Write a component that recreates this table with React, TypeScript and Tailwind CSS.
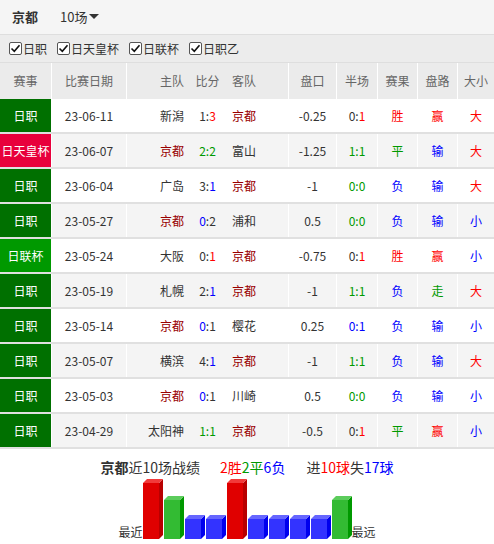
import React from "react";

const D = "text-[#333333]";
const R = "text-[#ff0000]";
const G = "text-[#009900]";
const B = "text-[#0000ff]";
const K = "text-[#990000]";

type Seg = [string, string];
type Row = {
  lg: string;
  lc: string;
  date: string;
  home: string;
  hc: string;
  score: Seg[];
  away: string;
  ac: string;
  pan: string;
  half: Seg[];
  res: Seg;
  pl: Seg;
  dx: Seg;
};

const JZ = "bg-[#007000]";
const TH = "bg-[#e8003c]";
const LB = "bg-[#009900]";

const rows: Row[] = [
  { lg: "日职", lc: JZ, date: "23-06-11", home: "新潟", hc: D, score: [["1:", D], ["3", R]], away: "京都", ac: K, pan: "-0.25", half: [["0:", D], ["1", R]], res: ["胜", R], pl: ["赢", R], dx: ["大", R] },
  { lg: "日天皇杯", lc: TH, date: "23-06-07", home: "京都", hc: K, score: [["2:2", G]], away: "富山", ac: D, pan: "-1.25", half: [["1:1", G]], res: ["平", G], pl: ["输", B], dx: ["大", R] },
  { lg: "日职", lc: JZ, date: "23-06-04", home: "广岛", hc: D, score: [["3:", D], ["1", B]], away: "京都", ac: K, pan: "-1", half: [["0:0", G]], res: ["负", B], pl: ["输", B], dx: ["大", R] },
  { lg: "日职", lc: JZ, date: "23-05-27", home: "京都", hc: K, score: [["0", B], [":2", D]], away: "浦和", ac: D, pan: "0.5", half: [["0:0", G]], res: ["负", B], pl: ["输", B], dx: ["小", B] },
  { lg: "日联杯", lc: LB, date: "23-05-24", home: "大阪", hc: D, score: [["0:", D], ["1", R]], away: "京都", ac: K, pan: "-0.75", half: [["0:", D], ["1", R]], res: ["胜", R], pl: ["赢", R], dx: ["小", B] },
  { lg: "日职", lc: JZ, date: "23-05-19", home: "札幌", hc: D, score: [["2:", D], ["1", B]], away: "京都", ac: K, pan: "-1", half: [["1:1", G]], res: ["负", B], pl: ["走", G], dx: ["大", R] },
  { lg: "日职", lc: JZ, date: "23-05-14", home: "京都", hc: K, score: [["0", B], [":1", D]], away: "樱花", ac: D, pan: "0.25", half: [["0:1", B]], res: ["负", B], pl: ["输", B], dx: ["小", B] },
  { lg: "日职", lc: JZ, date: "23-05-07", home: "横滨", hc: D, score: [["4:", D], ["1", B]], away: "京都", ac: K, pan: "-1", half: [["1:1", G]], res: ["负", B], pl: ["输", B], dx: ["大", R] },
  { lg: "日职", lc: JZ, date: "23-05-03", home: "京都", hc: K, score: [["0", B], [":1", D]], away: "川崎", ac: D, pan: "0.5", half: [["0:0", G]], res: ["负", B], pl: ["输", B], dx: ["小", B] },
  { lg: "日职", lc: JZ, date: "23-04-29", home: "太阳神", hc: D, score: [["1:1", G]], away: "京都", ac: K, pan: "-0.5", half: [["0:", D], ["1", R]], res: ["平", G], pl: ["赢", R], dx: ["小", B] },
];

function Check({ label }: { label: string }) {
  return (
    <div className="flex items-center mr-[10px]">
      <span className="w-[13px] h-[13px] bg-white border border-[#555555] rounded-[2px] flex items-center justify-center">
        <svg width="11" height="11" viewBox="0 0 11 11">
          <path d="M1.5 5.5 L4.3 8.3 L9.5 2.2" fill="none" stroke="#111" strokeWidth="1.6" />
        </svg>
      </span>
      <span className="ml-px text-[12px] text-[#333333]">{label}</span>
    </div>
  );
}

type BarKind = "r" | "g" | "b";
const barColors: Record<BarKind, { f: string; s: string; t: string; h: number }> = {
  r: { f: "#e00000", s: "#b80000", t: "#f23a3a", h: 56 },
  g: { f: "#33bb33", s: "#009900", t: "#5ccc5c", h: 39 },
  b: { f: "#3333ff", s: "#0000ee", t: "#6666ff", h: 20 },
};

function Bar({ k }: { k: BarKind }) {
  const c = barColors[k];
  const h = c.h;
  return (
    <svg width="20" height={h + 4} className="block mr-px last:mr-0">
      <rect x="0" y="4" width="16" height={h} fill={c.f} />
      <polygon points={`16,4 20,0 20,${h} 16,${h + 4}`} fill={c.s} />
      <polygon points="0,4 4,0 20,0 16,4" fill={c.t} />
    </svg>
  );
}

export default function App() {
  const bars: BarKind[] = ["r", "g", "b", "b", "r", "b", "b", "b", "b", "g"];
  return (
    <div className="w-[494px] h-[544px] overflow-hidden bg-white font-['Noto_Sans_CJK_SC','Noto_Sans',sans-serif] text-[#333333]">
      {/* top bar */}
      <div className="h-[35px] bg-[#f5f5f5] border-b border-[#dedede] flex items-center pl-[12px]">
        <span className="text-[13px] font-bold text-[#333333]">京都</span>
        <span className="ml-[22px] text-[13px] text-[#333333]">10场</span>
        <svg width="10" height="6" viewBox="0 0 10 6" className="ml-[2px]">
          <polygon points="0,0 10,0 5,5" fill="#333" />
        </svg>
      </div>
      {/* filter row */}
      <div className="h-[28px] bg-[#ececec] border-b border-[#dedede] flex items-center pl-[9px]">
        <Check label="日职" />
        <Check label="日天皇杯" />
        <Check label="日联杯" />
        <Check label="日职乙" />
      </div>
      {/* table header */}
      <div className="h-[36px] bg-[#ebebeb] flex text-[12px] text-[#666666]">
        <div className="w-[52px] border-r border-white flex items-center justify-center">赛事</div>
        <div className="w-[75px] border-r border-white flex items-center justify-center">比赛日期</div>
        <div className="w-[162px] border-r border-white flex items-center">
          <span className="w-[57px] text-right">主队</span>
          <span className="w-[47px] text-center">比分</span>
          <span className="pl-px">客队</span>
        </div>
        <div className="w-[48px] border-r border-white flex items-center justify-center">盘口</div>
        <div className="w-[41px] border-r border-white flex items-center justify-center">半场</div>
        <div className="w-[40px] border-r border-white flex items-center justify-center">赛果</div>
        <div className="w-[40px] border-r border-white flex items-center justify-center">盘路</div>
        <div className="flex-1 flex items-center justify-center">大小</div>
      </div>
      {/* rows */}
      {rows.map((r, i) => (
        <div
          key={i}
          className={`h-[35px] flex text-[12px] border-b-2 border-[#e0e0e0] ${i % 2 === 0 ? "bg-white" : "bg-[#f4f4f4]"}`}
        >
          <div className="w-[52px] border-r border-white flex">
            <div className={`flex-1 flex items-center justify-center text-white ${r.lc}`}>{r.lg}</div>
          </div>
          <div className="w-[75px] border-r border-white flex items-center justify-center text-[#333333]">{r.date}</div>
          <div className="w-[162px] border-r border-white flex items-center">
            <span className={`w-[57px] text-right ${r.hc}`}>{r.home}</span>
            <span className="w-[47px] text-center">
              {r.score.map((s, j) => (
                <span key={j} className={s[1]}>{s[0]}</span>
              ))}
            </span>
            <span className={`pl-px ${r.ac}`}>{r.away}</span>
          </div>
          <div className="w-[48px] border-r border-white flex items-center justify-center text-[#333333]">{r.pan}</div>
          <div className="w-[41px] border-r border-white flex items-center justify-center">
            {r.half.map((s, j) => (
              <span key={j} className={s[1]}>{s[0]}</span>
            ))}
          </div>
          <div className={`w-[40px] border-r border-white flex items-center justify-center ${r.res[1]}`}>{r.res[0]}</div>
          <div className={`w-[40px] border-r border-white flex items-center justify-center ${r.pl[1]}`}>{r.pl[0]}</div>
          <div className={`flex-1 flex items-center justify-center ${r.dx[1]}`}>{r.dx[0]}</div>
        </div>
      ))}
      {/* summary */}
      <div className="mt-[8px] flex justify-center text-[14px] leading-[20px]">
        <span>
          <span className="font-bold text-[#333333]">京都</span>
          <span className="text-[#333333]">近10场战绩</span>
        </span>
        <span className="ml-[20px]">
          <span className={R}>2胜</span>
          <span className={G}>2平</span>
          <span className={B}>6负</span>
        </span>
        <span className="ml-[21px]">
          <span className="text-[#333333]">进</span>
          <span className={R}>10球</span>
          <span className="text-[#333333]">失</span>
          <span className={B}>17球</span>
        </span>
      </div>
      <div className="mt-[2px] flex justify-center items-end">
        <span className="text-[12px] leading-[14px] text-[#333333]">最近</span>
        <div className="flex items-end">
          {bars.map((b, i) => (
            <Bar key={i} k={b} />
          ))}
        </div>
        <span className="text-[12px] leading-[14px] text-[#333333]">最远</span>
      </div>
    </div>
  );
}
